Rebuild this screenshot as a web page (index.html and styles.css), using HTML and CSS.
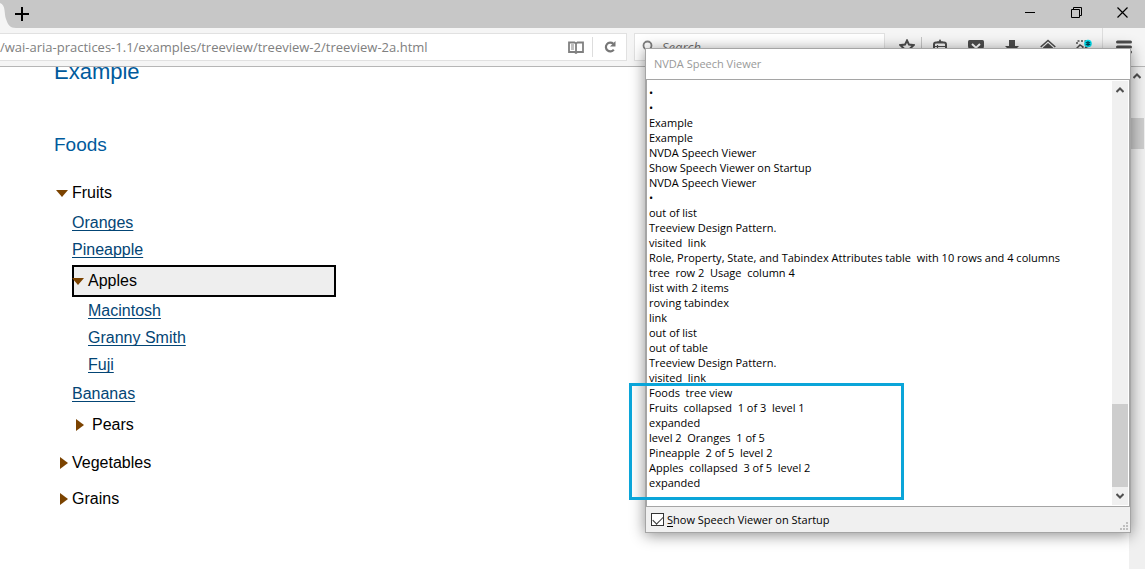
FILE: index.html
```html
<!DOCTYPE html>
<html lang="en">
<head>
<meta charset="utf-8">
<title>Treeview Example</title>
<link rel="stylesheet" href="styles.css">
</head>
<body>
<div class="browser">
  <header class="tabbar">
    <svg class="tab-edge" width="16" height="28" viewBox="0 0 16 28" aria-hidden="true"><path d="M0 3C6 5 4 14 6 19C8 25 10 28 16 28H0Z" fill="#f5f5f5"/></svg>
    <button class="new-tab" aria-label="New tab"><svg width="14" height="14" viewBox="0 0 14 14"><path d="M7 0V14M0 7H14" stroke="#000" stroke-width="2"/></svg></button>
    <div class="window-controls">
      <button aria-label="Minimize"><svg width="11" height="11" viewBox="0 0 11 11"><path d="M0 5.500H10" stroke="#000"/></svg></button>
      <button aria-label="Restore"><svg width="11" height="11" viewBox="0 0 11 11"><path d="M.5 2.500H8.500V10.500H.5ZM2.500 2.500V.5H10.500V8.500H8.500" fill="none" stroke="#000"/></svg></button>
      <button aria-label="Close"><svg width="11" height="11" viewBox="0 0 11 11"><path d="M.5.5L10.500 10.500M10.500.5L.5 10.500" stroke="#000" stroke-width="1.200"/></svg></button>
    </div>
  </header>

  <div class="toolbar">
    <div class="field url">
      <input type="text" aria-label="Address" value="/wai-aria-practices-1.1/examples/treeview/treeview-2/treeview-2a.html">
      <button class="reader" aria-label="Reader view"><svg width="16" height="13" viewBox="0 0 16 13"><path d="M1 1.500H6.500L8 2.500L9.500 1.500H15V11H9.500L8 12L6.500 11H1ZM8 3V12" fill="none" stroke="#808080" stroke-width="1.800"/><path d="M3 4H6M3 6H6M3 8H6" stroke="#808080"/></svg></button>
      <button class="reload" aria-label="Reload"><svg width="12" height="12" viewBox="0 0 12 12"><path d="M9.300 2.800A4.400 4.400 0 1 0 9.800 8.700" fill="none" stroke="#777" stroke-width="2.200"/><path d="M11.500 0V5.500H6Z" fill="#777"/></svg></button>
    </div>
    <div class="field search">
      <svg width="13" height="14" viewBox="0 0 13 14" aria-hidden="true"><circle cx="5.500" cy="5.500" r="4" fill="none" stroke="#808080" stroke-width="1.800"/><path d="M8.500 8.500L12 13" stroke="#808080" stroke-width="2.500"/></svg>
      <input type="text" aria-label="Search" placeholder="Search">
    </div>
    <div class="tools">
      <button class="star" aria-label="Bookmark"><svg width="16" height="16" viewBox="0 0 16 16"><path d="M8 1.500L10 5.600L14.600 6.200L11.300 9.400L12.100 14L8 11.800L3.900 14L4.700 9.400L1.400 6.200L6 5.600Z" fill="none" stroke="#4d4d4d" stroke-width="2"/></svg></button>
      <button aria-label="Bookmarks list"><svg width="16" height="16" viewBox="0 0 16 16"><path d="M5 2.500H6.500L8 0L9.500 2.500H11V4H5Z" fill="#4d4d4d"/><rect x="2" y="3.500" width="12" height="12" rx="2" fill="none" stroke="#4d4d4d" stroke-width="2"/><path d="M2 7.500H14M2 11H14M5.500 6V14" stroke="#4d4d4d" stroke-width="1.200"/></svg></button>
      <button aria-label="Pocket"><svg width="16" height="16" viewBox="0 0 16 16"><path d="M1.500 1H14.500Q16 1 16 2.500V7A8 8 0 0 1 0 7V2.500Q0 1 1.500 1Z" fill="#4d4d4d"/><path d="M4 5L8 8.700L12 5" fill="none" stroke="#fff" stroke-width="2"/></svg></button>
      <button aria-label="Downloads"><svg width="16" height="16" viewBox="0 0 16 16"><path d="M5 1H11V7H15L8 14L1 7H5Z" fill="#4d4d4d"/></svg></button>
      <button aria-label="Home"><svg width="16" height="16" viewBox="0 0 16 16"><path d="M.7 8L8 1.500L15.300 8" fill="none" stroke="#4d4d4d" stroke-width="1.600"/><path d="M3 8.500L8 4L13 8.500V15H3Z" fill="#4d4d4d"/></svg></button>
      <button aria-label="Extension"><svg width="18" height="16" viewBox="0 0 18 16"><path d="M2 5V2H12" fill="none" stroke="#4d4d4d" stroke-width="1.500" stroke-dasharray="2 1.500"/><path d="M2 9L5 6L8 8L6 12L1 11Z" fill="none" stroke="#4d4d4d" stroke-width="1.500"/><path d="M10 8L15 11" stroke="#4d4d4d" stroke-width="1.500"/><circle cx="13" cy="4.500" r="3.800" fill="#00e5f5"/><path d="M13 2V7M10.800 3.300L15.200 5.700M15.200 3.300L10.800 5.700" stroke="#045" stroke-width="1.200"/></svg></button>
      <button class="menu" aria-label="Menu"><svg width="16" height="14" viewBox="0 0 16 14"><path d="M1.500 2H14.500M1.500 7H14.500M1.500 12H14.500" stroke="#4d4d4d" stroke-width="3" stroke-linecap="round"/></svg></button>
    </div>
  </div>

  <div class="viewport">
    <main class="page">
      <h2>Example</h2>
      <h3 id="foods">Foods</h3>
      <ul class="tree" role="tree" aria-labelledby="foods">
        <li role="treeitem" aria-expanded="true"><span class="row"><span class="mark"><i class="open"></i></span>Fruits</span>
          <ul role="group">
            <li role="none"><a role="treeitem" href="#oranges">Oranges</a></li>
            <li role="none"><a role="treeitem" href="#pineapple">Pineapple</a></li>
            <li role="treeitem" aria-expanded="true"><span class="row focus"><span class="mark"><i class="open"></i></span>Apples</span>
              <ul role="group">
                <li role="none"><a role="treeitem" href="#macintosh">Macintosh</a></li>
                <li role="none"><a role="treeitem" href="#granny">Granny Smith</a></li>
                <li role="none"><a role="treeitem" href="#fuji">Fuji</a></li>
              </ul>
            </li>
            <li role="none"><a role="treeitem" href="#bananas">Bananas</a></li>
            <li role="treeitem" aria-expanded="false"><span class="row spaced"><span class="mark"><i class="closed"></i></span>Pears</span></li>
          </ul>
        </li>
        <li role="treeitem" aria-expanded="false"><span class="row"><span class="mark"><i class="closed"></i></span>Vegetables</span></li>
        <li role="treeitem" aria-expanded="false"><span class="row"><span class="mark"><i class="closed"></i></span>Grains</span></li>
      </ul>
    </main>
    <div class="scrollbar page-scroll" aria-hidden="true">
      <svg width="8" height="6" viewBox="0 0 8 6"><path d="M.5 5L4 1.500L7.500 5" fill="none" stroke="#505050" stroke-width="2"/></svg>
      <div class="thumb"></div>
    </div>
  </div>

  <section class="dialog" aria-label="NVDA Speech Viewer">
    <div class="title">NVDA Speech Viewer</div>
    <div class="log">
      <textarea readonly aria-label="Speech log" rows="27">•
•
Example
Example
NVDA Speech Viewer
Show Speech Viewer on Startup
NVDA Speech Viewer
•
out of list
Treeview Design Pattern.
visited  link
Role, Property, State, and Tabindex Attributes table  with 10 rows and 4 columns
tree  row 2  Usage  column 4
list with 2 items
roving tabindex
link
out of list
out of table
Treeview Design Pattern.
visited  link
Foods  tree view
Fruits  collapsed  1 of 3  level 1
expanded
level 2  Oranges  1 of 5
Pineapple  2 of 5  level 2
Apples  collapsed  3 of 5  level 2
expanded</textarea>
      <div class="scrollbar log-scroll" aria-hidden="true">
        <svg width="8" height="6" viewBox="0 0 8 6"><path d="M.5 5L4 1.500L7.500 5" fill="none" stroke="#505050" stroke-width="2"/></svg>
        <div class="thumb"></div>
        <svg width="8" height="6" viewBox="0 0 8 6"><path d="M.5 1L4 4.500L7.500 1" fill="none" stroke="#505050" stroke-width="2"/></svg>
      </div>
    </div>
    <div class="status">
      <input type="checkbox" id="startup" checked>
      <label for="startup"><u>S</u>how Speech Viewer on Startup</label>
      <svg class="grip" width="8" height="8" viewBox="0 0 8 8" aria-hidden="true"><path d="M6 0h2v2h-2zM3 3h2v2h-2zM6 3h2v2h-2zM0 6h2v2h-2zM3 6h2v2h-2zM6 6h2v2h-2z" fill="#bfbfbf"/></svg>
    </div>
    <div class="highlight"></div>
  </section>
</div>
</body>
</html>
```
FILE: styles.css
```css
* { box-sizing: border-box; }
body { margin: 0; background: #fff; font-family: "Liberation Sans", Arial, sans-serif; }
button { display: flex; align-items: center; justify-content: center; padding: 0; border: 0; background: none; }
input, textarea { border: 0; padding: 0; background: none; outline: 0; }
svg { display: block; flex: none; }

.browser { position: relative; display: flex; flex-direction: column; height: 100vh; overflow: hidden; }

.tabbar { display: flex; flex: none; height: 28px; background: #c7c7c7; }
.new-tab { width: 12px; }
.window-controls { display: flex; margin-left: auto; height: 24px; }
.window-controls button { width: 46px; }

.toolbar { display: flex; flex: none; height: 39px; padding: 5px 0; background: #f5f5f5; border-bottom: 1px solid #b6b6b6; }
.field { display: flex; align-items: center; height: 28px; background: #fff; border: 1px solid #e1e1e1; }
.field input { flex: 1; min-width: 0; height: 26px; font: 13px "Open Sans", "Noto Sans", sans-serif; color: #808080; }
.url { flex: 1; border-left: 0; }
.reader { width: 32px; }
.reload { width: 34px; height: 20px; border-left: 1px solid #ddd; }
.search { width: 251px; margin-left: 7px; padding-left: 7px; gap: 7px; }
.search input { font-style: italic; }
.search input::placeholder { color: #707070; opacity: 1; }
.tools { display: flex; align-items: center; }
.tools button { width: 36px; height: 20px; }
.tools .star { width: 30px; margin-left: 7px; border-right: 1px solid #c4c4c4; }
.tools .menu { width: 43px; height: 38px; border-left: 1px solid #ddd; }

.viewport { display: flex; flex: 1; min-height: 0; overflow: hidden; }
.page { flex: 1; padding-left: 54px; color: #000; font-size: 16px; }
h2, h3 { margin: 0; font-weight: normal; line-height: 24px; color: #005a9c; }
h2 { margin-top: -7px; font-size: 22px; }
h3 { margin-top: 49px; font-size: 19px; }
ul { margin: 0; padding: 0 0 0 16px; list-style: none; }
.tree { display: flex; flex-direction: column; gap: 4px; margin-top: 20px; padding-left: 2px; }
.row { display: flex; align-items: center; height: 32px; line-height: 32px; }
.tree ul { padding-bottom: 2px; }
.tree ul .row { width: 264px; margin-top: 2px; }
.focus { background: #eee; box-shadow: inset 0 0 0 2px #000; }
.mark { display: flex; flex: none; width: 16px; }
.spaced .mark { width: 20px; }
.open { border: 6px solid transparent; border-top: 7px solid #7b4300; border-bottom: 0; }
.closed { margin-left: 4px; border: 6px solid transparent; border-left: 8px solid #7b4300; border-right: 0; }
.tree a { display: block; width: fit-content; line-height: 27px; color: #034575; text-decoration: underline 1px; text-underline-offset: 2px; text-decoration-skip-ink: none; }

.scrollbar { display: flex; flex: none; flex-direction: column; align-items: center; background: #f0f0f0; }
.page-scroll { width: 16px; padding-top: 6px; }
.page-scroll .thumb { width: 14px; height: 31px; margin-top: 39px; background: #cdcdcd; }

.dialog { position: absolute; top: 48px; right: 14px; width: 486px; background: #fff; border: 1px solid #a5a5a5; box-shadow: 0 2px 14px rgba(0, 0, 0, .45); font-family: "Open Sans", "Noto Sans", sans-serif; font-size: 11px; }
.title { padding-left: 8px; line-height: 30px; color: #999; border-bottom: 1px solid #a5a5a5; }
.log { display: flex; padding: 1px; border: 1px solid #a5a5a5; border-width: 0 1px 1px; }
.log textarea { display: block; flex: 1; padding: 4px 0 15px 1px; font: 11px/15px "Open Sans", "Noto Sans", sans-serif; color: #000; resize: none; overflow: hidden; white-space: pre; }
.log-scroll { width: 16px; padding: 6px 0; }
.log-scroll .thumb { width: 100%; height: 83px; margin: auto 0 6px; background: #cdcdcd; }
.status { display: flex; align-items: center; height: 25px; padding: 0 2px 0 5px; background: #f0f0f0; }
.status input { appearance: none; width: 13px; height: 13px; margin: 0 3px 0 0; border: 1px solid #333; background: #fff; display: grid; place-items: center; }
.status input:checked::before { content: ""; width: 9px; height: 5px; margin-top: -2px; border: solid #333; border-width: 0 0 1px 1px; rotate: -45deg; }
.status u { text-underline-offset: 2px; }
.grip { margin: auto 0 2px auto; }
.highlight { position: absolute; top: 334px; left: -17px; width: 275px; height: 117px; border: 3px solid #0aa5d9; pointer-events: none; }
```
